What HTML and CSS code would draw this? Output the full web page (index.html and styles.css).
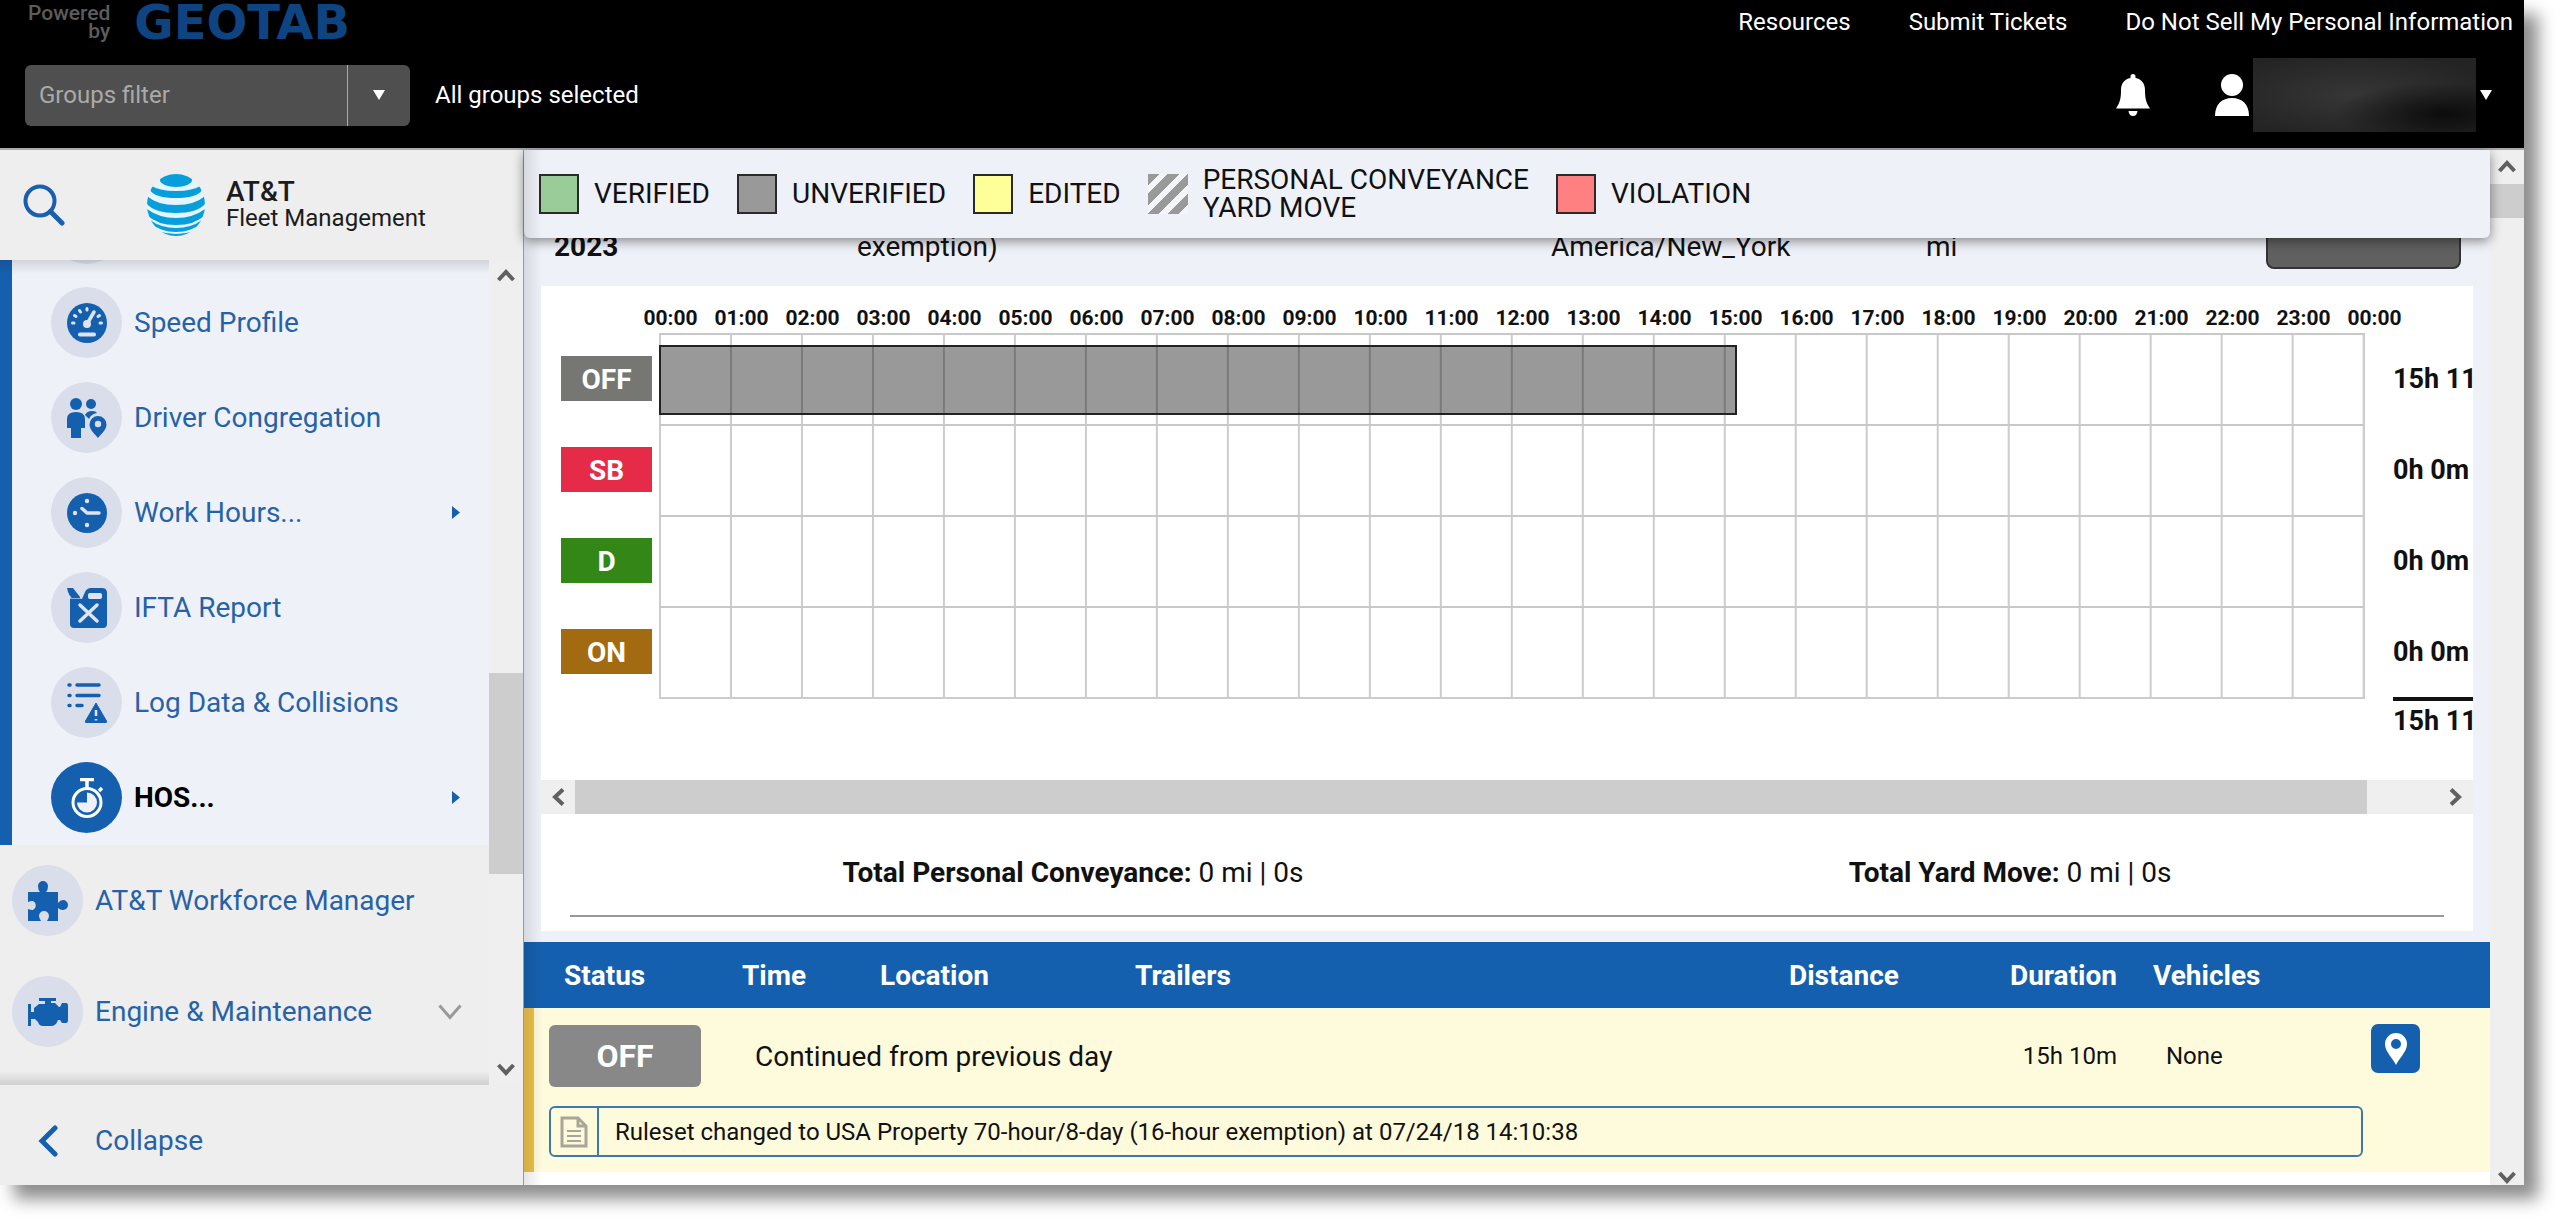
FILE: index.html
```html
<!DOCTYPE html>
<html lang="en">
<head>
<meta charset="utf-8">
<title>AT&amp;T Fleet Management - HOS Log</title>
<meta name="viewport" content="width=device-width, initial-scale=1">
<link rel="stylesheet" href="styles.css">
</head>
<body>
<div class="app">
  <header class="topbar">
    <div class="topbar-row">
      <div class="brand"><span class="powered">Powered<br>by</span><span class="geotab">GEOTAB</span></div>
      <nav class="toplinks">
        <a href="#">Resources</a>
        <a href="#">Submit Tickets</a>
        <a href="#">Do Not Sell My Personal Information</a>
      </nav>
    </div>
    <div class="topbar-row tools">
      <div class="filter">
        <input type="text" placeholder="Groups filter" aria-label="Groups filter">
        <button type="button" aria-label="Choose groups"><span class="caret"></span></button>
      </div>
      <span class="selected">All groups selected</span>
      <div class="account">
        <button type="button" class="bell" aria-label="Notifications">
          <svg width="34" height="42" viewBox="0 0 34 42" fill="#fff"><path d="M14.500 4V2.500Q14.500 0 17 0T19.500 2.500V4C26 5 29 10 29 16C29 25 30 28 34 34.500H0C4 28 5 25 5 16C5 10 8 5 14.500 4ZM12.500 37H21.500Q21 42 17 42T12.500 37Z"/></svg>
        </button>
        <button type="button" class="user" aria-label="User menu">
          <svg width="34" height="42" viewBox="0 0 34 42" fill="#fff"><ellipse cx="17" cy="11" rx="11" ry="11"/><path d="M0 42C0 30 7 24 17 24S34 30 34 42Z"/></svg>
          <span class="username"></span>
          <span class="caret"></span>
        </button>
      </div>
    </div>
  </header>

  <div class="body">
    <aside class="sidebar">
      <div class="side-head">
        <button type="button" class="search" aria-label="Search">
          <svg width="42" height="42" viewBox="0 0 42 42" fill="none" stroke="#1a5fae" stroke-width="4" stroke-linecap="round"><circle cx="17" cy="17" r="14.500"/><path d="M27.500 27.500 39 39" stroke-width="5"/></svg>
        </button>
        <svg class="globe" width="58" height="62" viewBox="0 0 58 62" aria-hidden="true">
          <defs><clipPath id="ball"><ellipse cx="29" cy="31" rx="29" ry="31"/></clipPath></defs>
          <g clip-path="url(#ball)" fill="#079fdb">
            <ellipse cx="29" cy="31" rx="29" ry="31" fill="#e4f5fc"/>
            <ellipse cx="29" cy="6" rx="16" ry="7"/>
            <path d="M3 11Q12 17 29 17T55 11V16Q50 24 29 24T3 16Z"/>
            <path d="M0 22Q10 31 29 31T58 22V30Q50 39 29 39T0 30Z"/>
            <path d="M0 35Q12 44 29 44T58 35V41Q48 51 29 51T0 41Z"/>
            <path d="M3 46Q14 54 29 54T55 46V49Q44 58 29 58T3 49Z"/>
            <path d="M10 57Q20 60 29 60T48 57V62H10Z"/>
          </g>
        </svg>
        <div class="product"><span class="product-name">AT&amp;T</span><span>Fleet Management</span></div>
      </div>
      <div class="side-scroll">
        <nav class="menu">
          <ul class="submenu">
            <li class="clipped"><span class="disc"></span></li>
            <li><a href="#"><span class="disc"><svg viewBox="0 0 40 40"><circle cx="20" cy="20" r="20" fill="#1560ae"/><g stroke="#dfe4f0" stroke-linecap="round" fill="none"><path d="M20 21 27 9" stroke-width="3.500"/><path d="M13 31.500H27" stroke-width="4"/><path d="M5.500 20H7M33 20H34.500M7.500 12.500 9 13.500M31 13.500 32.500 12.500M12.500 7.500 13.500 9M20 5.500V7" stroke-width="3"/></g><circle cx="20" cy="21" r="4" fill="#dfe4f0"/></svg></span>Speed Profile</a></li>
            <li><a href="#"><span class="disc"><svg viewBox="0 0 40 40" fill="#1560ae"><circle cx="9" cy="6" r="6"/><circle cx="24" cy="6" r="5"/><path d="M0 30V21Q0 14 9 14T18 21V30H14V40H4V30ZM18 17Q20 13 25 13Q29 13 30 15Q24 16 22 21Q20 19 18 17ZM31 18A8.500 8.500 0 0 0 22.500 26.500C22.500 32 28 36 31 40C34 36 39.500 32 39.500 26.500A8.500 8.500 0 0 0 31 18Z"/><circle cx="31" cy="26" r="3.200" fill="#d9deea"/></svg></span>Driver Congregation</a></li>
            <li><a href="#"><span class="disc"><svg viewBox="0 0 40 40"><circle cx="20" cy="20" r="20" fill="#1560ae"/><path d="M15 15.500 20 20H32" fill="none" stroke="#dfe4f0" stroke-width="3.500" stroke-linecap="round" stroke-linejoin="round"/><g fill="#dfe4f0"><circle cx="20" cy="8" r="2.200"/><circle cx="8" cy="20" r="2.200"/><circle cx="20" cy="32" r="2.200"/></g></svg></span>Work Hours...<i class="more"></i></a></li>
            <li><a href="#"><span class="disc"><svg viewBox="0 0 40 40"><path d="M3 11 15 11 18 4Q20 0 24 0H35Q40 0 40 5V36Q40 40 36 40H7Q3 40 3 36ZM0 0H6L13 9V10.500H5Q1 6 0 0Z" fill="#1560ae"/><path d="M3 10.500H14" stroke="#8fb0d8" stroke-width="1"/><rect x="21" y="5" width="14" height="6" rx="2" fill="#dfe4f0"/><path d="M13 17 30 33M30 17 13 33" stroke="#dfe4f0" stroke-width="3.500" stroke-linecap="round"/></svg></span>IFTA Report</a></li>
            <li><a href="#"><span class="disc"><svg viewBox="0 0 40 40"><g stroke="#1560ae" stroke-width="3.500" stroke-linecap="round"><path d="M2 2H3M10 2H32M2 12.500H3M10 12.500H32M2 22.500H3M10 22.500H15"/></g><path d="M29 20 39.500 38Q40 40 38 40H20Q18 40 18.500 38Z" fill="#1560ae" stroke="#1560ae" stroke-linejoin="round"/><path d="M29 27V33M29 36V37.500" stroke="#dfe4f0" stroke-width="2.500"/></svg></span>Log Data &amp; Collisions</a></li>
            <li class="current"><a href="#"><span class="disc"><svg viewBox="0 0 40 40" fill="none" stroke="#fff"><circle cx="20" cy="24.500" r="14" stroke-width="3"/><path d="M13 1.500H27M20 2V10M32 13 35 10" stroke-width="3.500"/><path d="M20 24.500V14.500A10 10 0 1 1 10 24.500Z" fill="#eef2f8" stroke="none"/></svg></span>HOS...<i class="more"></i></a></li>
          </ul>
          <ul class="mainmenu">
            <li><a href="#"><span class="disc"><svg viewBox="0 0 40 40" fill="#1560ae"><path d="M0 11H12Q10 9 10 5A5 5 0 0 1 20 5Q20 9 18 11H30V22Q32 19 35 19A5 5 0 0 1 35 29Q32 29 30 27V40H19Q21 37 21 35A5 5 0 0 0 11 35Q11 37 13 40H0V28Q2 29 5 29A5 5 0 0 0 5 20Q2 20 0 21Z"/></svg></span>AT&amp;T Workforce Manager</a></li>
            <li><a href="#"><span class="disc"><svg viewBox="0 0 40 40" fill="#1560ae"><path d="M11 6H28V9H23V11H27L31 15H32L34 11H38Q40 11 40 14V28Q40 31 38 31H34L32 28H30Q28 34 23 34H15Q11 34 10 30L7 27H3V34H0V12H3V20H6V16L11 12H17V9H11Z"/></svg></span>Engine &amp; Maintenance<svg class="expand" width="24" height="16" viewBox="0 0 24 16" fill="none" stroke="#999" stroke-width="3"><path d="M1.500 1.500 12 13.500 22.500 1.500"/></svg></a></li>
          </ul>
        </nav>
        <div class="vbar">
          <svg width="18" height="14" viewBox="0 0 18 14"><path d="M1.500 12 9 4 16.500 12"/></svg>
          <span class="vthumb"></span>
          <svg width="18" height="14" viewBox="0 0 18 14"><path d="M1.500 2 9 10 16.500 2"/></svg>
        </div>
      </div>
      <a href="#" class="collapse"><svg width="20" height="32" viewBox="0 0 20 32" fill="none" stroke="#1560ae" stroke-width="5" stroke-linecap="round"><path d="M17 3 4 16 17 29"/></svg>Collapse</a>
    </aside>

    <main class="main">
      <div class="page">
        <div class="legend">
          <span class="key"><i class="swatch verified"></i>VERIFIED</span>
          <span class="key"><i class="swatch unverified"></i>UNVERIFIED</span>
          <span class="key"><i class="swatch edited"></i>EDITED</span>
          <span class="key"><i class="swatch hatch"></i><span>PERSONAL CONVEYANCE<br>YARD MOVE</span></span>
          <span class="key"><i class="swatch violation"></i>VIOLATION</span>
        </div>
        <div class="day">
          <strong>2023</strong><span>exemption)</span><span>America/New_York</span><span>mi</span>
          <button type="button" aria-label="Options"></button>
        </div>

        <section class="card">
          <div class="hours">
            <span>00:00</span><span>01:00</span><span>02:00</span><span>03:00</span><span>04:00</span><span>05:00</span><span>06:00</span><span>07:00</span><span>08:00</span><span>09:00</span><span>10:00</span><span>11:00</span><span>12:00</span><span>13:00</span><span>14:00</span><span>15:00</span><span>16:00</span><span>17:00</span><span>18:00</span><span>19:00</span><span>20:00</span><span>21:00</span><span>22:00</span><span>23:00</span><span>00:00</span>
          </div>
          <div class="duty"><span class="badge off">OFF</span><div class="track"><div class="bar" style="width:63.26%"></div></div><span class="sum">15h 11m</span></div>
          <div class="duty"><span class="badge sb">SB</span><div class="track"></div><span class="sum">0h 0m</span></div>
          <div class="duty"><span class="badge d">D</span><div class="track"></div><span class="sum">0h 0m</span></div>
          <div class="duty"><span class="badge on">ON</span><div class="track"></div><span class="sum">0h 0m</span></div>
          <div class="duty-total"><span class="sum">15h 11m</span></div>
          <div class="hbar">
            <svg width="14" height="18" viewBox="0 0 14 18"><path d="M12 1.500 4 9 12 16.500"/></svg>
            <span class="hthumb"></span>
            <svg width="14" height="18" viewBox="0 0 14 18"><path d="M2 1.500 10 9 2 16.500"/></svg>
          </div>
          <div class="totals">
            <span><strong>Total Personal Conveyance:</strong> 0 mi | 0s</span>
            <span><strong>Total Yard Move:</strong> 0 mi | 0s</span>
          </div>
        </section>

        <table class="log">
          <colgroup><col class="c-status"><col class="c-time"><col class="c-location"><col class="c-trailers"><col class="c-distance"><col class="c-duration"><col class="c-vehicles"><col class="c-map"></colgroup>
          <thead>
            <tr><th>Status</th><th>Time</th><th>Location</th><th>Trailers</th><th>Distance</th><th class="right">Duration</th><th>Vehicles</th><th></th></tr>
          </thead>
          <tbody>
            <tr class="entry">
              <td class="edge"><button type="button" class="status">OFF</button></td>
              <td colspan="3" class="event">Continued from previous day</td>
              <td></td>
              <td class="right">15h 10m</td>
              <td class="vehicle">None</td>
              <td class="map"><button type="button" class="pin" aria-label="Show on map"><svg width="22" height="32" viewBox="0 0 22 32"><path fill-rule="evenodd" fill="#fff" d="M11 0A11 11 0 0 0 0 11C0 19 8 25 11 32C14 25 22 19 22 11A11 11 0 0 0 11 0ZM11 6A5 5 0 1 1 11 16A5 5 0 1 1 11 6Z"/></svg></button></td>
            </tr>
            <tr class="remark">
              <td class="edge" colspan="7"><div class="note"><span class="note-icon"><svg width="28" height="32" viewBox="0 0 28 32" fill="none" stroke="#a8a698" stroke-width="3"><path d="M2 2H18L26 10V30H2ZM18 2V10H26"/><path stroke-width="2" d="M7 15H21M7 20H21M7 25H21"/></svg></span>Ruleset changed to USA Property 70-hour/8-day (16-hour exemption) at 07/24/18 14:10:38</div></td>
              <td></td>
            </tr>
          </tbody>
        </table>
      </div>
      <div class="vbar page-bar">
        <svg width="18" height="14" viewBox="0 0 18 14"><path d="M1.500 12 9 4 16.500 12"/></svg>
        <span class="vthumb"></span>
        <svg width="18" height="14" viewBox="0 0 18 14"><path d="M1.500 2 9 10 16.500 2"/></svg>
      </div>
    </main>
  </div>
</div>
</body>
</html>
```
FILE: styles.css
```css
* { box-sizing: border-box; }

body {
  margin: 0;
  min-height: 100vh;
  padding: 0 36px 36px 0;
  background: #fff;
  color: #111;
  font-family: Roboto, "Liberation Sans", sans-serif;
  font-size: 28px;
}

button { font: inherit; border: 0; padding: 0; background: none; color: inherit; }
a { color: inherit; text-decoration: none; }
ul { list-style: none; margin: 0; padding: 0; }
svg { display: block; flex: none; }

.app {
  display: flex;
  flex-direction: column;
  height: calc(100vh - 36px);
  background: #fff;
  box-shadow: 14px 14px 16px rgba(0, 0, 0, .45);
}

/* Top bar */
.topbar {
  flex: none;
  height: 150px;
  background: #000;
  border-bottom: 2px solid #aaa;
  color: #fff;
  font-size: 24px;
}
.topbar-row { display: flex; align-items: center; justify-content: space-between; height: 44px; }
.brand { display: flex; align-items: center; gap: 24px; padding-left: 28px; }
.powered { color: #5c5c5e; font-size: 21px; font-weight: 500; line-height: 18px; text-align: right; }
.geotab { color: #0f4482; font: bold 48px/44px "DejaVu Sans", sans-serif; }
.toplinks { display: flex; gap: 58px; padding-right: 11px; }
.tools { justify-content: flex-start; height: 104px; padding: 0 32px 2px 25px; }
.filter { display: flex; width: 385px; height: 61px; border-radius: 6px; background: #4f4f4f; overflow: hidden; }
.filter input { flex: 1; min-width: 0; border: 0; padding: 0 14px; background: none; color: #fff; font: inherit; }
.filter input::placeholder { color: #aaa; opacity: 1; }
.filter button { display: grid; place-items: center; width: 63px; border-left: 1px solid #aaa; }
.caret { width: 12px; height: 10px; background: #fff; clip-path: polygon(0 0, 100% 0, 50% 100%); }
.selected { margin-left: 25px; }
.account { display: flex; gap: 65px; margin-left: auto; }
.user { display: flex; align-items: center; gap: 4px; }
.bell { display: flex; align-items: center; }
.username {
  width: 223px;
  height: 74px;
  background: radial-gradient(ellipse at 85% 75%, rgba(0, 0, 0, .7), transparent 40%), radial-gradient(ellipse at 45% 50%, #363636, #242424 80%);
}

/* Sidebar */
.body { display: flex; flex: 1; min-height: 0; }
.sidebar {
  display: flex;
  flex-direction: column;
  flex: none;
  width: 524px;
  background: #eee;
  border-right: 1px solid #999;
  color: #2762a6;
}
.side-head { display: flex; align-items: center; flex: none; height: 110px; padding-left: 23px; }
.globe { margin-left: 82px; }
.product { display: flex; flex-direction: column; margin-left: 21px; color: #1c1c1c; font-size: 24px; line-height: 27px; }
.product-name { font-size: 28px; font-weight: 500; }
.side-scroll { display: flex; flex: 1; min-height: 0; }
.menu {
  flex: 1;
  display: flex;
  flex-direction: column;
  overflow: hidden;
  position: relative;
}
.menu::before, .menu::after { content: ""; position: absolute; left: 0; right: 0; height: 14px; }
.menu::before { top: 0; background: linear-gradient(rgba(0, 0, 0, .12), transparent); }
.menu::after { bottom: 0; background: linear-gradient(transparent, rgba(0, 0, 0, .12)); }
.submenu { background: #eef2f8; border-left: 12px solid #1560ae; }
.submenu .clipped { display: flex; align-items: flex-end; height: 15px; padding: 0 0 11px 39px; }
.menu a { display: flex; align-items: center; gap: 12px; }
.submenu a { height: 95px; padding: 0 29px 0 39px; }
.mainmenu a { height: 111px; padding: 0 27px 0 12px; }
.disc { display: grid; place-items: center; flex: none; width: 71px; height: 71px; border-radius: 50%; background: #d9deea; }
.disc svg { width: 40px; height: 40px; }
.current { color: #000; font-weight: 700; }
.current .disc { background: #1560ae; }
.more { margin-left: auto; width: 8px; height: 13px; background: #1560ae; clip-path: polygon(0 0, 100% 50%, 0 100%); }
.expand { margin-left: auto; }
.collapse { display: flex; align-items: center; flex: none; height: 100px; gap: 37px; padding: 11px 0 0 38px; }

/* Drawn scrollbars */
.vbar {
  display: flex;
  flex-direction: column;
  align-items: center;
  flex: none;
  width: 34px;
  padding: 8px 0;
  background: #efefef;
}
.vbar svg path, .hbar svg path { fill: none; stroke: #606060; stroke-width: 4; }
.vthumb { width: 100%; height: 201px; margin: 391px 0 auto; background: #cdcdcd; }
.page-bar { padding: 9px 0 0; }
.page-bar .vthumb { height: 34px; margin-top: 11px; }

/* Main page */
.main { display: flex; flex: 1; min-width: 0; position: relative; }
.main::after {
  content: "";
  position: absolute;
  inset: 0 auto 0 0;
  z-index: 3;
  width: 18px;
  background: linear-gradient(90deg, rgba(0, 0, 0, .1), transparent);
  pointer-events: none;
}
.page { flex: 1; min-width: 0; background: linear-gradient(#eef1f8 1020px, #fff 1020px); }
.legend {
  display: flex;
  align-items: center;
  gap: 27px;
  height: 88px;
  padding: 0 15px;
  position: relative;
  z-index: 2;
  background: #eef1f7;
  border-radius: 0 0 6px 6px;
  box-shadow: 0 3px 12px rgba(0, 0, 0, .45);
  line-height: 28px;
}
.key { display: flex; align-items: center; gap: 15px; }
.swatch { width: 40px; height: 40px; border: 2px solid #2a2a2a; }
.verified { background: #99cc99; }
.unverified { background: #999; }
.edited { background: #ffff99; }
.violation { background: #ff8080; }
.hatch { border: 0; background: repeating-linear-gradient(135deg, #999 0 8px, #f4f5f8 8px 14px); }
.day {
  display: grid;
  grid-template-columns: 303fr 694fr 375fr 340fr 195px;
  height: 56px;
  margin-top: -8px;
  padding: 0 29px 0 30px;
  line-height: 34px;
}
.day button { height: 39px; background: #606060; border: 2px solid #333; border-radius: 0 0 8px 8px; }

.card { margin: 0 17px; background: #fff; overflow: hidden; }
.hours { display: flex; padding: 24px 63px 0 94px; height: 47px; font-size: 21px; font-weight: 700; line-height: 16px; }
.hours span { flex: 1; text-align: center; }
.duty { display: flex; align-items: center; height: 91px; padding-left: 20px; }
.badge { width: 91px; height: 45px; margin-right: 7px; color: #fff; font-weight: 700; line-height: 48px; text-align: center; }
.off { background: #767672; }
.sb { background: #e52b47; }
.d { background: #338717; }
.on { background: #a36b11; }
.track {
  display: flex;
  align-items: center;
  flex: 1;
  height: 91px;
  border-top: 2px solid #c8c8c8;
  border-right: 2px solid #ccc;
  background: linear-gradient(90deg, #ccc 2px, transparent 2px) 0 0 / calc(100% / 24) 100%;
}
.bar { height: 70px; border: 2px solid #222; background: rgba(0, 0, 0, .4); }
.sum { width: 80px; margin-left: 28px; font-size: 27px; font-weight: 700; white-space: nowrap; }
.duty-total { display: flex; height: 83px; padding: 0 108px 0 118px; }
.duty-total::before { content: ""; flex: 1; height: 2px; background: #ccc; }
.duty-total .sum { height: 40px; margin-right: -108px; border-top: 4px solid #111; line-height: 40px; }
.hbar { display: flex; align-items: center; height: 34px; padding: 0 10px; background: #efefef; }
.hthumb { flex: 1; height: 100%; margin: 0 82px 0 10px; background: #cdcdcd; }
.totals {
  display: flex;
  justify-content: space-around;
  height: 103px;
  margin: 0 29px 14px;
  padding-top: 42px;
  border-bottom: 2px solid #999;
  line-height: 34px;
}

/* Log table */
.log { width: 100%; margin-top: 11px; border-spacing: 0; table-layout: fixed; }
.log th, .log td { padding: 0; text-align: left; }
.log th { height: 66px; background: #1560ae; color: #fff; }
.log th:first-child { padding-left: 40px; }
.log .right { padding-right: 36px; text-align: right; }
.c-status { width: 218px; }
.c-time { width: 138px; }
.c-location { width: 255px; }
.c-distance { width: 220px; }
.c-duration { width: 144px; }
.c-vehicles { width: 218px; }
.c-map { width: 119px; }
.log tbody { background: #fefbdc; font-size: 24px; }
.log .edge { padding-left: 15px; border-left: 10px solid #edc14b; }
.entry { height: 96px; }
.entry .event { padding-left: 13px; font-size: 28px; }
.entry .vehicle { padding-left: 13px; }
.status { display: block; width: 152px; height: 62px; border-radius: 6px; background: #888; color: #fff; font-size: 32px; font-weight: 700; }
.entry .map { padding: 16px 0 0; vertical-align: top; }
.pin { display: grid; place-items: center; width: 49px; height: 49px; border-radius: 7px; background: #1560ae; }
.remark { height: 68px; }
.remark td { vertical-align: top; }
.note { display: flex; align-items: center; height: 51px; margin: 2px 8px 0 0; border: 2px solid #3f78ad; border-radius: 6px; }
.note-icon { display: grid; place-items: center; width: 48px; height: 100%; margin-right: 16px; border-right: 2px solid #3f78ad; }
```
